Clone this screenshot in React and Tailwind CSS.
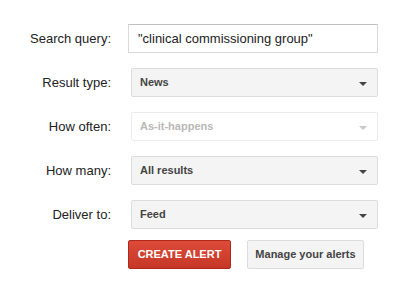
import React from "react";

function Arrow({ disabled }) {
  return (
    <span
      className={`absolute right-[10px] top-[13px] h-0 w-0 border-x-[4px] border-t-[4px] border-x-transparent ${
        disabled ? "border-t-[#c8c8c8]" : "border-t-[#444]"
      }`}
    />
  );
}

function Select({ value, disabled }) {
  return (
    <div
      className={`relative ml-[3px] flex h-[29px] w-[247px] items-center rounded-[2px] border pl-[8px] text-[11px] font-bold ${
        disabled
          ? "border-[#ececec] bg-white text-[#b8b8b8]"
          : "border-[#dcdcdc] bg-[#f4f4f4] text-[#444]"
      }`}
    >
      {value}
      <Arrow disabled={disabled} />
    </div>
  );
}

function Row({ label, children, className = "" }) {
  return (
    <div className={`flex items-center ${className}`}>
      <div className="w-[111px] text-right text-[13px] text-[#222]">{label}</div>
      <div className="ml-[17px]">{children}</div>
    </div>
  );
}

export default function App() {
  return (
    <div
      className="h-[285px] w-[408px] bg-white pt-[24px]"
      style={{ fontFamily: '"Liberation Sans", Arial, sans-serif' }}
    >
      <Row label="Search query:">
        <div className="flex h-[29px] w-[250px] items-center border border-[#d9d9d9] border-t-[#c0c0c0] pl-[9px] text-[13px] text-[#222]">
          "clinical commissioning group"
        </div>
      </Row>
      <Row label="Result type:" className="mt-[15px]">
        <Select value="News" />
      </Row>
      <Row label="How often:" className="mt-[15px]">
        <Select value="As-it-happens" disabled />
      </Row>
      <Row label="How many:" className="mt-[15px]">
        <Select value="All results" />
      </Row>
      <Row label="Deliver to:" className="mt-[15px]">
        <Select value="Feed" />
      </Row>
      <div className="mt-[11px] flex pl-[128px]">
        <button className="flex h-[29px] w-[103px] items-center justify-center rounded-[2px] border border-[#b0281a] bg-gradient-to-b from-[#dd4b39] to-[#c53727] text-[11px] font-bold text-white">
          CREATE ALERT
        </button>
        <button className="ml-[16px] flex h-[29px] w-[117px] items-center justify-center rounded-[2px] border border-[#dcdcdc] bg-[#f4f4f4] text-[11px] font-bold text-[#444]">
          Manage your alerts
        </button>
      </div>
    </div>
  );
}
